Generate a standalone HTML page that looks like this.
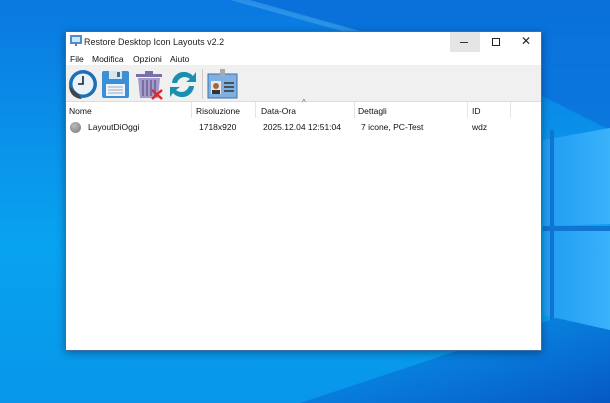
<!DOCTYPE html>
<html><head><meta charset="utf-8"><style>
*{margin:0;padding:0;box-sizing:border-box}
body{width:610px;height:403px;overflow:hidden;position:relative;font-family:"Liberation Sans",sans-serif;font-size:8.5px;color:#111;
background:linear-gradient(to bottom,#0a78e0 0%,#0a92ea 35%,#08a3f0 60%,#0896ea 100%);}
.beam{position:absolute;}
.win{position:absolute;left:65px;top:31px;width:477px;height:320px;background:#fff;box-shadow:0 2px 8px rgba(0,0,0,.35);border:1px solid #3a6fa8}
.t{position:absolute}
</style></head><body>
<svg class="beam" style="left:0;top:0" width="610" height="403">
<defs><linearGradient id="g" x1="0" x2="1"><stop offset="0" stop-color="#1e9cf2"/><stop offset="1" stop-color="#3ab2fa"/></linearGradient>
<linearGradient id="d" x1="0" x2="1" y1="0" y2="1"><stop offset="0" stop-color="#0a70d8" stop-opacity="0"/><stop offset="1" stop-color="#0658c4"/></linearGradient></defs>
<polygon points="240,0 610,0 610,130 470,60" fill="#0a6ed8" opacity=".7"/>
<polygon points="230,0 250,0 470,62 460,64" fill="#4aaaf0" opacity=".5"/>
<polygon points="300,403 610,300 610,403" fill="url(#d)"/>
<polygon points="543,140 610,128 610,224 543,226" fill="url(#g)"/>
<polygon points="543,231 610,230 610,330 543,315" fill="url(#g)"/>
<rect x="550" y="130" width="4" height="190" fill="#0f74d2"/>
<rect x="543" y="226" width="67" height="5" fill="#0f74d2"/>
</svg>
<div class="win">
 <svg class="t" style="left:4px;top:3px" width="12" height="12"><rect x="0" y="0" width="12" height="9" fill="#4a8fd0"/><rect x="2" y="2" width="8" height="5" fill="#cfe6fa"/><rect x="5" y="9" width="2" height="2" fill="#777"/></svg>
 <div class="t" style="left:18px;top:5px;font-size:9px;color:#222">Restore Desktop Icon Layouts v2.2</div>
 <div class="t" style="left:384px;top:0;width:30px;height:20px;background:#e5e5e5"></div>
 <div class="t" style="left:394px;top:10px;width:8px;height:1px;background:#333"></div>
 <div class="t" style="left:426px;top:6px;width:8px;height:8px;border:1px solid #222"></div>
 <div class="t" style="left:455px;top:2px;font-size:12px;color:#222">✕</div>
 <div class="t" style="left:4px;top:22px">File</div>
 <div class="t" style="left:26px;top:22px">Modifica</div>
 <div class="t" style="left:67px;top:22px">Opzioni</div>
 <div class="t" style="left:104px;top:22px">Aiuto</div>
 <div class="t" style="left:0;top:33px;width:475px;height:37px;background:#f0f0f0;border-bottom:1px solid #ddd"></div>
 <svg class="t" style="left:0;top:34px" width="180" height="36">
  <circle cx="17" cy="18" r="14" fill="#1f6fb4"/><circle cx="17" cy="18" r="10.5" fill="#e8f2fb"/>
  <path d="M17 10V18H12" stroke="#222" stroke-width="1.6" fill="none"/>
  <path d="M3 20Q4 32 16 33L12 28Z" fill="#444"/>
  <rect x="36" y="5" width="27" height="27" rx="2" fill="#3a8fd6"/><rect x="43" y="5" width="13" height="8" fill="#d8e6f2"/><rect x="51" y="6" width="3" height="5" fill="#3a6f9c"/><rect x="40" y="18" width="19" height="12" fill="#eef4fa"/><path d="M42 21H57M42 24H57M42 27H57" stroke="#9ab" stroke-width="1"/>
  <rect x="70" y="8" width="26" height="3" fill="#7a6fa8"/><rect x="79" y="5" width="8" height="3" fill="#7a6fa8"/>
  <path d="M72 12H94L92 32H74Z" fill="#a49bc8"/><path d="M77 14V30M81 14V30M85 14V30M89 14V30" stroke="#6a5f98" stroke-width="1.5"/>
  <path d="M86 24L96 33M96 24L86 33" stroke="#e02828" stroke-width="2.5"/>
  <path d="M106 17A12 12 0 0 1 127 10L130 6V16H120L124 13A8 8 0 0 0 111 17Z" fill="#1a8fb0"/>
  <path d="M128 20A12 12 0 0 1 107 27L104 31V21H114L110 24A8 8 0 0 0 123 20Z" fill="#1a8fb0"/>
  <rect x="136" y="3" width="1" height="30" fill="#ccc"/>
  <rect x="142" y="8" width="29" height="24" fill="#7fb0e0" stroke="#3a70b0"/><rect x="154" y="3" width="5" height="7" fill="#aaa"/>
  <rect x="145" y="15" width="10" height="13" fill="#f0e8e0"/><circle cx="150" cy="20" r="3" fill="#a06840"/><rect x="146" y="24" width="8" height="4" fill="#333"/>
  <path d="M158 17H168M158 21H168M158 25H168" stroke="#333" stroke-width="1.5"/>
 </svg>
 <div class="t" style="left:3px;top:74px">Nome</div>
 <div class="t" style="left:130px;top:74px">Risoluzione</div>
 <div class="t" style="left:195px;top:74px">Data-Ora</div>
 <div class="t" style="left:236px;top:66px;font-size:8px;color:#666">^</div>
 <div class="t" style="left:292px;top:74px">Dettagli</div>
 <div class="t" style="left:406px;top:74px">ID</div>
 <div class="t" style="left:125px;top:70px;width:1px;height:16px;background:#e5e5e5"></div>
 <div class="t" style="left:189px;top:70px;width:1px;height:16px;background:#e5e5e5"></div>
 <div class="t" style="left:288px;top:70px;width:1px;height:16px;background:#e5e5e5"></div>
 <div class="t" style="left:401px;top:70px;width:1px;height:16px;background:#e5e5e5"></div>
 <div class="t" style="left:444px;top:70px;width:1px;height:16px;background:#e5e5e5"></div>
 <div class="t" style="left:4px;top:90px;width:11px;height:11px;border-radius:50%;background:radial-gradient(circle at 40% 35%,#bbb,#777)"></div>
 <div class="t" style="left:22px;top:90px">LayoutDiOggi</div>
 <div class="t" style="left:133px;top:90px">1718x920</div>
 <div class="t" style="left:197px;top:90px">2025.12.04 12:51:04</div>
 <div class="t" style="left:295px;top:90px">7 icone, PC-Test</div>
 <div class="t" style="left:406px;top:90px">wdz</div>
</div>
</body></html>
